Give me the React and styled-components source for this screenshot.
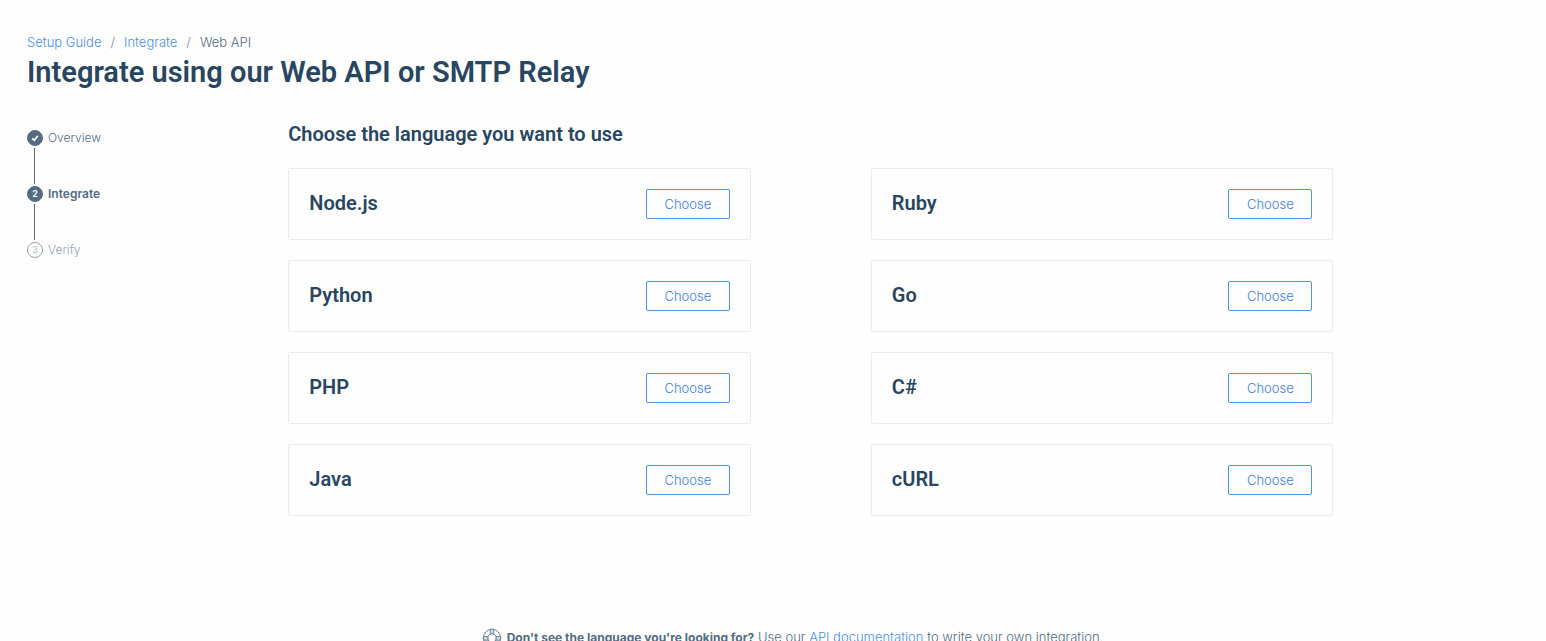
import React from 'react';
import styled, { createGlobalStyle, css } from 'styled-components';

const GlobalStyle = createGlobalStyle`
  * { box-sizing: border-box; }
  body {
    margin: 0;
    background: #fefefe;
    color: #546b81;
    font-family: Inter, 'Liberation Sans', sans-serif;
    font-size: 13px;
    line-height: 20px;
  }
`;

const Page = styled.div`
  padding: 32px 26px 20px 27px;
`;

const Breadcrumbs = styled.ol`
  display: flex;
  margin: 0;
  padding: 0;
  list-style: none;
`;

const Crumb = styled.li`
  font-weight: 300;
  & + &::before {
    content: '/';
    margin: 0 9px;
    color: #7d8a97;
  }
`;

const Link = styled.a`
  color: #4a90e2;
  font-weight: 300;
  text-decoration: none;
`;

const Title = styled.h1`
  margin: 0;
  color: #294661;
  font-family: Roboto, 'Liberation Sans', sans-serif;
  font-size: 29px;
  font-weight: 600;
  line-height: 40px;
`;

const Columns = styled.div`
  display: flex;
  margin-top: 28px;
`;

const Steps = styled.ol`
  flex: 0 0 17.5%;
  margin: 0;
  padding: 8px 0 0;
  list-style: none;
`;

const Step = styled.li`
  display: flex;
  align-items: center;
  gap: 5px;
  height: 20px;
  font-size: 12px;
  font-weight: ${(p) => (p.$state === 'current' ? 600 : 300)};
  color: ${(p) => (p.$state === 'upcoming' ? '#94a3b3' : '#546b81')};
`;

const Connector = styled.li`
  width: 1px;
  height: 36px;
  margin-left: 7px;
  background: #546b81;
`;

const Marker = styled.span`
  display: flex;
  align-items: center;
  justify-content: center;
  width: 16px;
  height: 16px;
  border: 1px solid #546b81;
  border-radius: 50%;
  background: #546b81;
  color: #fff;
  font-size: 9px;
  line-height: 14px;
  ${(p) =>
    p.$state === 'upcoming' &&
    css`
      border-color: #94a3b3;
      background: transparent;
      color: #94a3b3;
    `}
`;

const Main = styled.main`
  flex: 0 0 70%;
`;

const Heading = styled.h2`
  margin: 0 0 20px;
  color: #294661;
  font-family: Roboto, 'Liberation Sans', sans-serif;
  font-size: 20px;
  font-weight: 600;
  line-height: 28px;
`;

const Grid = styled.div`
  display: grid;
  grid-template-columns: 1fr 1fr;
  gap: 20px 120px;
`;

const Card = styled.section`
  display: flex;
  align-items: flex-start;
  justify-content: space-between;
  padding: 20px;
  border: 1px solid #e9ecef;
  border-radius: 2px;
`;

const Language = styled.h3`
  margin: 0;
  color: #294661;
  font-family: Roboto, 'Liberation Sans', sans-serif;
  font-size: 20px;
  font-weight: 600;
  line-height: 28px;
`;

const ChooseButton = styled.button`
  min-width: 84px;
  height: 30px;
  padding: 0 16px;
  border: 1px solid #4a95e6;
  border-radius: 2px;
  background: transparent;
  color: #3d7ddb;
  font-family: inherit;
  font-size: 13px;
  font-weight: 300;
  cursor: pointer;
`;

const Help = styled.footer`
  display: flex;
  justify-content: center;
  align-items: center;
  gap: 5px;
  margin-top: 111px;
  padding-left: 38px;
`;

const HelpText = styled.p`
  margin: 0;
  font-weight: 300;
`;

const Strong = styled.strong`
  font-size: 12px;
  font-weight: 700;
`;

const STEPS = [
  { label: 'Overview', state: 'done' },
  { label: 'Integrate', state: 'current' },
  { label: 'Verify', state: 'upcoming' },
];

const LANGUAGES = ['Node.js', 'Ruby', 'Python', 'Go', 'PHP', 'C#', 'Java', 'cURL'];

function CheckIcon() {
  return (
    <svg width="10" height="10" viewBox="0 0 10 10" fill="none" aria-hidden="true">
      <path d="M2.2 5.4 4.2 7.2 7.8 2.9" stroke="currentColor" strokeWidth="1.7" />
    </svg>
  );
}

function LifeRingIcon() {
  return (
    <svg width="20" height="20" viewBox="0 0 20 20" fill="none" stroke="#6f8496" aria-hidden="true">
      <circle cx="10" cy="10" r="8.7" />
      <circle cx="10" cy="10" r="4.3" />
      <g fill="#d3dae0">
        <path d="M8.2 1.2h3.6v4.6H8.2zM8.2 14.2h3.6v4.6H8.2z" />
        <path d="M1.3 8.6h4.6v3.6H1.7zM18.7 8.6h-4.6v3.6h4.2z" />
      </g>
    </svg>
  );
}

export default function App() {
  return (
    <>
      <GlobalStyle />
      <Page>
        <nav aria-label="Breadcrumb">
          <Breadcrumbs>
            <Crumb><Link href="#guide">Setup Guide</Link></Crumb>
            <Crumb><Link href="#integrate">Integrate</Link></Crumb>
            <Crumb aria-current="page">Web API</Crumb>
          </Breadcrumbs>
        </nav>
        <Title>Integrate using our Web API or SMTP Relay</Title>
        <Columns>
          <Steps>
            {STEPS.map((step, i) => (
              <React.Fragment key={step.label}>
                {i > 0 && <Connector role="presentation" />}
                <Step $state={step.state}>
                  <Marker $state={step.state}>
                    {step.state === 'done' ? <CheckIcon /> : i + 1}
                  </Marker>
                  {step.label}
                </Step>
              </React.Fragment>
            ))}
          </Steps>
          <Main>
            <Heading>Choose the language you want to use</Heading>
            <Grid>
              {LANGUAGES.map((name) => (
                <Card key={name}>
                  <Language>{name}</Language>
                  <ChooseButton type="button">Choose</ChooseButton>
                </Card>
              ))}
            </Grid>
          </Main>
        </Columns>
        <Help>
          <LifeRingIcon />
          <HelpText>
            <Strong>Don't see the language you're looking for?</Strong> Use our{' '}
            <Link href="#docs">API documentation</Link> to write your own integration.
          </HelpText>
        </Help>
      </Page>
    </>
  );
}
